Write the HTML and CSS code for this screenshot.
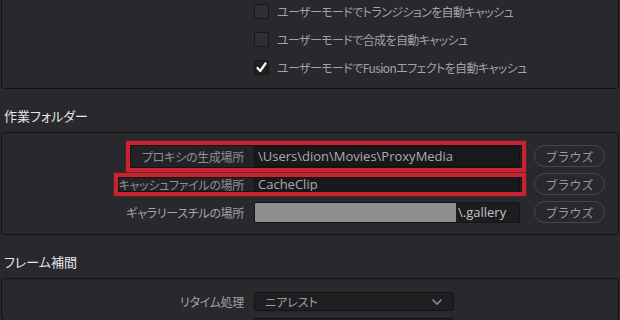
FILE: index.html
```html
<!DOCTYPE html>
<html lang="ja">
<head>
    <meta charset="UTF-8">
    <title>環境設定 - キャッシュ</title>
    <link rel="stylesheet" href="styles.css">
</head>
<body>
    <!-- 自動キャッシュ -->
    <div class="panel panel-top">
        <label class="check-row"><span class="check-box"></span>ユーザーモードでトランジションを自動キャッシュ</label>
        <label class="check-row"><span class="check-box"></span>ユーザーモードで合成を自動キャッシュ</label>
        <label class="check-row">
            <span class="check-box checked">
                <svg width="13" height="13" viewBox="0 0 13 13"><path d="M2.5 7 L5.2 10 L10.5 2.5" fill="none" stroke="#fff" stroke-width="2.2" stroke-linecap="round" stroke-linejoin="round"/></svg>
            </span>ユーザーモードでFusionエフェクトを自動キャッシュ</label>
    </div>

    <!-- 作業フォルダー -->
    <h2 class="section-title">作業フォルダー</h2>
    <div class="panel panel-rows">
        <div class="form-row">
            <span class="row-label">プロキシの生成場所</span>
            <div class="path-field">\Users\dion\Movies\ProxyMedia</div>
            <button class="browse">ブラウズ</button>
            <span class="mark mark-proxy"></span>
        </div>
        <div class="form-row">
            <span class="row-label">キャッシュファイルの場所</span>
            <div class="path-field">CacheClip</div>
            <button class="browse">ブラウズ</button>
            <span class="mark mark-cache"></span>
        </div>
        <div class="form-row">
            <span class="row-label">ギャラリースチルの場所</span>
            <div class="path-field"><span class="redacted"></span>\.gallery</div>
            <button class="browse">ブラウズ</button>
        </div>
    </div>

    <!-- フレーム補間 -->
    <h2 class="section-title">フレーム補間</h2>
    <div class="panel panel-bottom">
        <div class="form-row select-row">
            <span class="row-label">リタイム処理</span>
            <div class="select">ニアレスト
                <svg width="12" height="8" viewBox="0 0 12 8"><path d="M1.5 1.5 L6 6 L10.5 1.5" fill="none" stroke="#8a8a8e" stroke-width="1.6"/></svg>
            </div>
        </div>
        <div class="form-row select-row">
            <span class="row-label"></span>
            <div class="select"></div>
        </div>
    </div>
</body>
</html>
```

FILE: styles.css
```css
/* Base */
body {
    margin: 0;
    padding: 0 1px;
    background-color: #28282d;
    font-family: "Noto Sans CJK JP", "Open Sans", sans-serif;
    font-feature-settings: "palt";
    color: #a3a3a6;
    font-size: 12px;
    height: 320px;
    overflow: hidden;
}

/* Panels */
.panel {
    border: 1px solid #131315;
    border-radius: 4px;
    background-color: #28282d;
}

.panel-top {
    border-top: none;
    border-radius: 0 0 4px 4px;
    padding: 0 0 10px 252px;
    display: flex;
    flex-direction: column;
    gap: 6px;
}

.panel-rows {
    padding: 12px 0 11px;
    display: flex;
    flex-direction: column;
    gap: 6px;
}

.panel-bottom {
    padding: 13px 0 0;
    height: 28px;
    overflow: hidden;
    display: flex;
    flex-direction: column;
    gap: 7px;
}

/* Section titles */
.section-title {
    margin: 0;
    padding: 19px 0 8px 3px;
    font-size: 13px;
    line-height: 16px;
    font-weight: normal;
    color: #e6e6e8;
}

/* Checkbox rows */
.check-row {
    display: flex;
    align-items: center;
    height: 22px;
    gap: 8px;
    letter-spacing: -0.6px;
}

.check-box {
    flex: none;
    width: 13px;
    height: 13px;
    border: 1px solid #17171a;
    border-radius: 2px;
    background-color: #2e2e33;
    display: flex;
    align-items: center;
    justify-content: center;
}

.check-box.checked {
    background-color: #1f1f22;
}

/* Form rows */
.form-row {
    position: relative;
    display: grid;
    grid-template-columns: 252px 266px 85px;
    align-items: center;
    width: 603px;
    height: 22px;
}

.row-label {
    text-align: right;
    padding-right: 10px;
    white-space: nowrap;
    letter-spacing: -0.3px;
}

.path-field {
    height: 19px;
    line-height: 19px;
    border: 1px solid #141416;
    border-radius: 2px;
    background-color: #1d1d20;
    font-family: "Open Sans", sans-serif;
    font-size: 13px;
    color: #c2c2c4;
    padding: 0 3px;
    display: flex;
    white-space: nowrap;
    overflow: hidden;
}

.redacted {
    flex: none;
    width: 202px;
    margin-left: -4px;
    margin-right: 2px;
    background-color: #8f8f8f;
}

.browse {
    margin-left: 14px;
    width: 71px;
    height: 22px;
    border: 1px solid #46464c;
    border-radius: 11px;
    background: transparent;
    font-family: inherit;
    font-size: 12px;
    color: #9a9a9e;
    padding: 0;
}

/* Red annotation boxes */
.mark {
    position: absolute;
    border: 4px solid #c9232f;
    box-shadow: inset 0 0 0 1px #151517, 0 0 1px #c9232f;
    background-color: rgba(0, 0, 0, 0.12);
    pointer-events: none;
}

.mark-proxy {
    left: 124px;
    right: 79px;
    top: -4px;
    bottom: -5px;
}

.mark-cache {
    left: 112px;
    right: 79px;
    top: 0;
    bottom: -1px;
}

/* Select */
.select-row {
    height: 19px;
}

.select {
    height: 17px;
    border: 1px solid #121214;
    border-radius: 3px;
    background-color: #1f1f22;
    display: flex;
    align-items: center;
    justify-content: space-between;
    padding: 0 10px;
    width: 178px;
    color: #9d9da0;
}
```
